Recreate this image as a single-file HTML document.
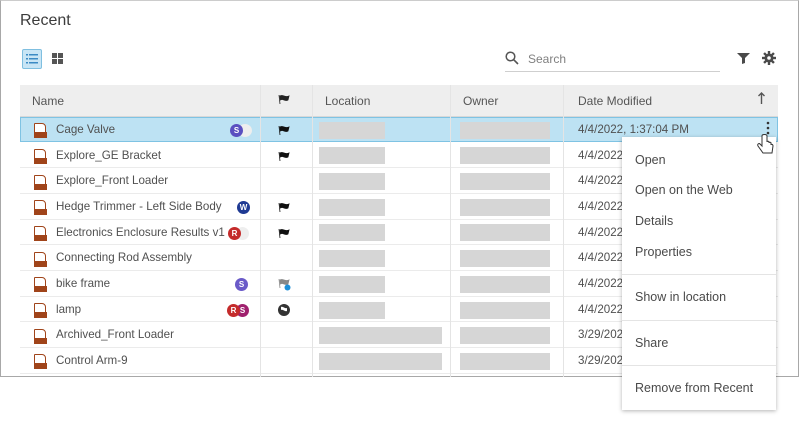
<!DOCTYPE html>
<html><head><style>
*{box-sizing:border-box;margin:0;padding:0}
body{width:800px;height:424px;background:#fff;font-family:"Liberation Sans",sans-serif;color:#505050;position:relative;overflow:hidden;font-size:11.6px}
.frame{position:absolute;left:0;top:0;width:799px;height:377px;border:1px solid #a8a8a8;border-top-color:#ccc}
.abs{position:absolute}
h1{position:absolute;left:20px;top:12px;font-size:16px;font-weight:normal;color:#3c3c3c}
.hdr{position:absolute;left:20px;top:85px;width:758px;height:32px;background:#eeeeee;border-bottom:1px solid #d8d8d8}
.row{position:absolute;left:20px;width:758px;height:26px;border-bottom:1px solid #ebebeb}
.sel{background:#bde2f3;border:1px solid #7fc3e3}
.vl{position:absolute;top:85px;width:1px;height:292px;background:#e4e4e4}
.gray{position:absolute;height:17px;background:#d6d6d6}
.t{position:absolute;white-space:nowrap}
.icon{position:absolute;width:12px;height:14px;border:1.5px solid #a0441a;border-radius:1px 4px 1px 1px;background:#fff}
.icon:after{content:"";position:absolute;left:-1.5px;right:-1.5px;bottom:-1.5px;height:6px;background:#a0441a}
.av{position:absolute;width:13px;height:13px;border-radius:50%;color:#fff;font-size:8px;text-align:center;line-height:13px;font-weight:bold}
.menu{position:absolute;left:622px;top:137px;width:154px;height:273px;background:#fff;box-shadow:0 1px 4px rgba(0,0,0,.3)}
.menu div{position:absolute;left:13px;font-size:12.5px;color:#4a4a4a}
.sep{left:0!important;width:154px;height:1px;background:#e4e4e4}
</style></head><body>
<div class="frame"></div>
<h1>Recent</h1>
<div class="abs" style="left:22px;top:49px;width:20px;height:20px;background:#c8e5f5;border:1px solid #7fbfe0;border-radius:2px"></div>
<svg class="abs" style="left:26px;top:53px" width="12" height="12"><g fill="#3b8ac4"><rect x="0" y="1" width="2" height="1.5"/><rect x="3" y="1" width="9" height="1.5"/><rect x="0" y="5" width="2" height="1.5"/><rect x="3" y="5" width="9" height="1.5"/><rect x="0" y="9" width="2" height="1.5"/><rect x="3" y="9" width="9" height="1.5"/></g></svg>
<svg class="abs" style="left:52px;top:53px" width="12" height="12"><g fill="#555"><rect x="0" y="0" width="5" height="5"/><rect x="6" y="0" width="5" height="5"/><rect x="0" y="6" width="5" height="5"/><rect x="6" y="6" width="5" height="5"/></g></svg>
<svg class="abs" style="left:505px;top:51px" width="14" height="14"><circle cx="5.5" cy="5.5" r="4.3" fill="none" stroke="#555" stroke-width="1.5"/><line x1="8.7" y1="8.7" x2="13" y2="13" stroke="#555" stroke-width="1.6"/></svg>
<div class="t" style="left:528px;top:52px;color:#808080;font-size:12px">Search</div>
<div class="abs" style="left:505px;top:71px;width:215px;height:1px;background:#cfcfcf"></div>
<svg class="abs" style="left:737px;top:52px" width="13" height="12"><path d="M0 1H13L8 6V11L5 12V6Z" fill="#4a4a4a"/></svg>
<svg class="abs" style="left:762px;top:51px" width="14" height="14" viewBox="0 0 14 14"><g fill="#4a4a4a"><circle cx="7" cy="7" r="4.5"/><rect x="5.8" y="0" width="2.4" height="14"/><rect x="0" y="5.8" width="14" height="2.4"/><rect x="5.8" y="0" width="2.4" height="14" transform="rotate(45 7 7)"/><rect x="5.8" y="0" width="2.4" height="14" transform="rotate(-45 7 7)"/></g><circle cx="7" cy="7" r="1.8" fill="#fff"/></svg>

<div class="hdr"></div>
<div class="t" style="left:32px;top:94px;color:#555;font-size:12px">Name</div>
<svg class="abs" style="left:278px;top:94px" width="12" height="11"><path d="M1 1L2 10M2 2C5 0 7 4 11 2L10 6C7 8 5 4 2.5 6Z" fill="#222" stroke="#222" stroke-width="0.8"/></svg>
<div class="t" style="left:325px;top:94px;color:#555;font-size:12px">Location</div>
<div class="t" style="left:463px;top:94px;color:#555;font-size:12px">Owner</div>
<div class="t" style="left:578px;top:94px;color:#555;font-size:12px">Date Modified</div>
<svg class="abs" style="left:758px;top:92px" width="7" height="12"><path d="M3.5 1V12M0.5 4L3.5 1L6.5 4" fill="none" stroke="#555" stroke-width="1.4"/></svg>

<div class="row sel" style="top:117px;height:25px"></div>
<div class="row" style="top:142px"></div><div class="row" style="top:168px"></div><div class="row" style="top:194px"></div><div class="row" style="top:219px"></div><div class="row" style="top:245px"></div><div class="row" style="top:271px"></div><div class="row" style="top:296px"></div><div class="row" style="top:322px"></div><div class="row" style="top:348px"></div>
<div class="vl" style="left:260px"></div><div class="vl" style="left:312px"></div><div class="vl" style="left:450px"></div><div class="vl" style="left:563px"></div>

<div class="icon" style="left:34px;top:123px"></div><div class="t" style="left:56px;top:123px">Cage Valve</div>
<div class="icon" style="left:34px;top:149px"></div><div class="t" style="left:56px;top:149px">Explore_GE Bracket</div>
<div class="icon" style="left:34px;top:175px"></div><div class="t" style="left:56px;top:174px">Explore_Front Loader</div>
<div class="icon" style="left:34px;top:200px"></div><div class="t" style="left:56px;top:200px">Hedge Trimmer - Left Side Body</div>
<div class="icon" style="left:34px;top:226px"></div><div class="t" style="left:56px;top:226px">Electronics Enclosure Results v1</div>
<div class="icon" style="left:34px;top:252px"></div><div class="t" style="left:56px;top:251px">Connecting Rod Assembly</div>
<div class="icon" style="left:34px;top:277px"></div><div class="t" style="left:56px;top:277px">bike frame</div>
<div class="icon" style="left:34px;top:303px"></div><div class="t" style="left:56px;top:303px">lamp</div>
<div class="icon" style="left:34px;top:329px"></div><div class="t" style="left:56px;top:328px">Archived_Front Loader</div>
<div class="icon" style="left:34px;top:354px"></div><div class="t" style="left:56px;top:354px">Control Arm-9</div>

<div class="av" style="left:238px;top:124px;width:14px;background:#eee"></div><div class="av" style="left:230px;top:124px;background:#5a4fc0">S</div>
<div class="av" style="left:237px;top:201px;background:#1f3a93">W</div>
<div class="av" style="left:236px;top:227px;background:#eee"></div><div class="av" style="left:228px;top:227px;background:#c42b2b">R</div>
<div class="av" style="left:235px;top:278px;background:#6a5ac8">S</div>
<div class="av" style="left:236px;top:304px;background:#a0206e">S</div><div class="av" style="left:227px;top:304px;background:#c42b2b">R</div>

<svg class="abs" style="left:278px;top:125px" width="12" height="11"><path d="M1 1L2 10M2 2C5 0 7 4 11 2L10 6C7 8 5 4 2.5 6Z" fill="#111" stroke="#111" stroke-width="0.8"/></svg>
<svg class="abs" style="left:278px;top:151px" width="12" height="11"><path d="M1 1L2 10M2 2C5 0 7 4 11 2L10 6C7 8 5 4 2.5 6Z" fill="#111" stroke="#111" stroke-width="0.8"/></svg>
<svg class="abs" style="left:278px;top:202px" width="12" height="11"><path d="M1 1L2 10M2 2C5 0 7 4 11 2L10 6C7 8 5 4 2.5 6Z" fill="#111" stroke="#111" stroke-width="0.8"/></svg>
<svg class="abs" style="left:278px;top:228px" width="12" height="11"><path d="M1 1L2 10M2 2C5 0 7 4 11 2L10 6C7 8 5 4 2.5 6Z" fill="#111" stroke="#111" stroke-width="0.8"/></svg>
<svg class="abs" style="left:278px;top:278px" width="14" height="14"><path d="M1 1L2 10M2 2C5 0 7 4 11 2L10 6C7 8 5 4 2.5 6Z" fill="#888" stroke="#888" stroke-width="0.8"/><circle cx="9.5" cy="9.5" r="3" fill="#1d8fd8"/></svg>
<svg class="abs" style="left:277px;top:303px" width="14" height="14"><circle cx="7" cy="7" r="6" fill="#333"/><path d="M4 4C6 3 8 6 10 5L10 8C8 9 6 6 4 7Z" fill="#fff"/></svg>

<div class="gray" style="left:319px;top:122px;width:66px"></div><div class="gray" style="left:319px;top:147px;width:66px"></div><div class="gray" style="left:319px;top:173px;width:66px"></div><div class="gray" style="left:319px;top:199px;width:66px"></div><div class="gray" style="left:319px;top:224px;width:66px"></div><div class="gray" style="left:319px;top:250px;width:66px"></div><div class="gray" style="left:319px;top:276px;width:66px"></div><div class="gray" style="left:319px;top:302px;width:66px"></div><div class="gray" style="left:319px;top:327px;width:123px"></div><div class="gray" style="left:319px;top:353px;width:123px"></div>
<div class="gray" style="left:460px;top:122px;width:90px"></div><div class="gray" style="left:460px;top:147px;width:90px"></div><div class="gray" style="left:460px;top:173px;width:90px"></div><div class="gray" style="left:460px;top:199px;width:90px"></div><div class="gray" style="left:460px;top:224px;width:90px"></div><div class="gray" style="left:460px;top:250px;width:90px"></div><div class="gray" style="left:460px;top:276px;width:90px"></div><div class="gray" style="left:460px;top:302px;width:90px"></div><div class="gray" style="left:460px;top:327px;width:90px"></div><div class="gray" style="left:460px;top:353px;width:90px"></div>

<div class="t" style="left:578px;top:123px">4/4/2022, 1:37:04 PM</div>
<div class="t" style="left:578px;top:149px">4/4/2022</div><div class="t" style="left:578px;top:174px">4/4/2022</div><div class="t" style="left:578px;top:200px">4/4/2022</div><div class="t" style="left:578px;top:226px">4/4/2022</div><div class="t" style="left:578px;top:251px">4/4/2022</div><div class="t" style="left:578px;top:277px">4/4/2022</div><div class="t" style="left:578px;top:303px">4/4/2022</div><div class="t" style="left:578px;top:328px">3/29/2022</div><div class="t" style="left:578px;top:354px">3/29/2022</div>
<svg class="abs" style="left:766px;top:121px" width="4" height="14"><circle cx="2" cy="2" r="1.3" fill="#333"/><circle cx="2" cy="7" r="1.3" fill="#333"/><circle cx="2" cy="12" r="1.3" fill="#333"/></svg>

<div class="menu">
<div style="top:16px">Open</div>
<div style="top:46px">Open on the Web</div>
<div style="top:77px">Details</div>
<div style="top:108px">Properties</div>
<div class="sep" style="top:137px"></div>
<div style="top:153px">Show in location</div>
<div class="sep" style="top:183px"></div>
<div style="top:199px">Share</div>
<div class="sep" style="top:228px"></div>
<div style="top:244px">Remove from Recent</div>
</div>
<svg class="abs" style="left:757px;top:134px" width="18" height="22"><path d="M5 2V12L3 10C2 9 0 10 1 12L6 19H15L16 12C16 10 14 10 14 11V9C14 8 12 8 12 9V8C12 7 10 7 10 8V2C10 0 5 0 5 2Z" fill="#fff" stroke="#333" stroke-width="1"/></svg>
</body></html>
